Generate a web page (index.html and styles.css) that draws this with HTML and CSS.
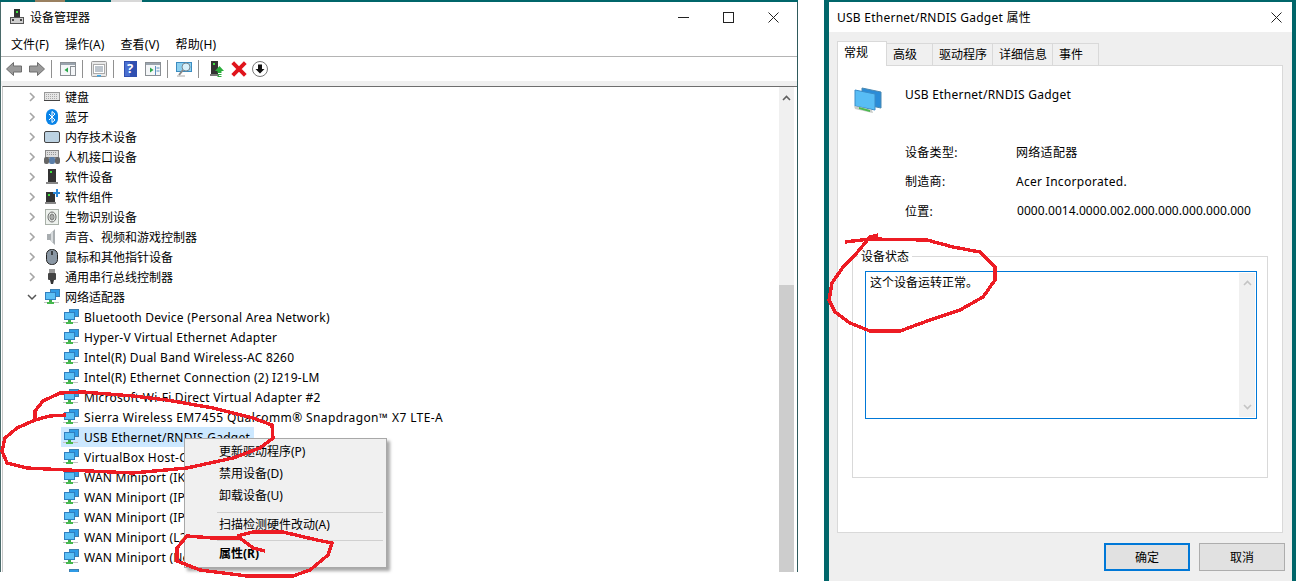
FILE: index.html
```html
<!DOCTYPE html>
<html lang="zh-CN">
<head>
  <meta charset="UTF-8" />
  <title>设备管理器</title>
  <link rel="stylesheet" href="styles.css">
</head>
<body>

  <svg class="defs" width="0" height="0">
    <symbol id="i-net" viewBox="0 0 16 16">
      <rect x="6.5" y="0.5" width="9" height="7" fill="#2f9be6" stroke="#3c7fb0"/>
      <rect x="1.5" y="3.5" width="10" height="7" fill="#5cc0f5" stroke="#2f7fc0"/>
      <rect x="5" y="11" width="3" height="2" fill="#3fae4a"/>
      <rect x="0" y="13" width="15" height="1" fill="#c4c4c4"/>
      <rect x="3" y="13" width="7" height="2" fill="#46b84f"/>
    </symbol>
    <symbol id="i-chev" viewBox="0 0 10 10">
      <path d="M3 1l4 4-4 4" fill="none" stroke="#a6a6a6" stroke-width="1.6"/>
    </symbol>
    <symbol id="i-chev-open" viewBox="0 0 10 10">
      <path d="M1 3l4 4 4-4" fill="none" stroke="#555" stroke-width="1.5"/>
    </symbol>
    <symbol id="i-keyboard" viewBox="0 0 16 16">
      <rect x="0.5" y="3.5" width="15" height="8" fill="#e6e6e6" stroke="#999"/>
      <path d="M2 5.5h12M2 7.5h12M2 9.5h12" stroke="#aaa" stroke-dasharray="1 1"/>
      <rect x="0" y="11" width="16" height="1" fill="#444"/>
    </symbol>
    <symbol id="i-bluetooth" viewBox="0 0 16 16">
      <rect x="2" y="0" width="12" height="16" rx="6" fill="#0a84e8"/>
      <path d="M5 5l6 6-3 2.500V2.500l3 2.500-6 6" fill="none" stroke="#fff" stroke-width="1"/>
    </symbol>
    <symbol id="i-memory" viewBox="0 0 16 16">
      <rect x="0.500" y="2.500" width="15" height="11" rx="1.500" fill="#bcd2e2" stroke="#444"/>
    </symbol>
    <symbol id="i-hid" viewBox="0 0 16 16">
      <rect x="1.500" y="1.500" width="13" height="7" fill="#ddd" stroke="#888"/>
      <path d="M3 3.500h10M3 5.500h10" stroke="#999" stroke-dasharray="1 1"/>
      <rect x="0" y="8" width="5" height="7" rx="2" fill="#666"/>
      <rect x="11" y="8" width="5" height="7" rx="2" fill="#666"/>
      <rect x="5" y="8" width="6" height="7" rx="2" fill="#5a7ea8"/>
    </symbol>
    <symbol id="i-softdev" viewBox="0 0 16 16">
      <rect x="4" y="0" width="8" height="13" fill="#333"/>
      <rect x="6" y="2" width="2" height="2" fill="#3fe03f"/>
      <rect x="2" y="13" width="12" height="2" fill="#888"/>
    </symbol>
    <symbol id="i-softcomp" viewBox="0 0 16 16">
      <rect x="2" y="3" width="9" height="10" fill="#333"/>
      <rect x="4" y="5" width="2" height="2" fill="#3fe03f"/>
      <path d="M9 3h3V0h2v3h2v2h-2v3h-2V5H9z" fill="#2a86d8"/>
      <rect x="1" y="13" width="11" height="2" fill="#888"/>
    </symbol>
    <symbol id="i-bio" viewBox="0 0 16 16">
      <rect x="1.500" y="0.500" width="13" height="15" fill="#eef2ee" stroke="#a8b0a8"/>
      <ellipse cx="8" cy="8" rx="4" ry="5" fill="none" stroke="#666"/>
      <ellipse cx="8" cy="8" rx="2" ry="3" fill="none" stroke="#666"/>
      <path d="M8 6v4" stroke="#666"/>
    </symbol>
    <symbol id="i-sound" viewBox="0 0 16 16">
      <path d="M3 5h3l5-5v16l-5-5H3z" fill="#a8adb0"/>
      <path d="M8 3v10" stroke="#d8dcde" stroke-width="2"/>
    </symbol>
    <symbol id="i-mouse" viewBox="0 0 16 16">
      <rect x="2.500" y="0.500" width="11" height="15" rx="5" fill="#8a97a4" stroke="#222"/>
      <path d="M8 2v4" stroke="#222" stroke-width="1.500"/>
    </symbol>
    <symbol id="i-usb" viewBox="0 0 16 16">
      <rect x="5" y="0" width="6" height="5" fill="#999"/>
      <rect x="4" y="4" width="8" height="7" rx="1" fill="#444"/>
      <path d="M6 11h4l-1 4H7z" fill="#333"/>
    </symbol>
    <symbol id="t-back" viewBox="0 0 16 16">
      <path d="M0.500 8L7.500 1.500V5H15.500V11H7.500V14.500z" fill="#9a9a9a" stroke="#6e6e6e"/>
    </symbol>
    <symbol id="t-fwd" viewBox="0 0 16 16">
      <path d="M15.500 8L8.500 1.500V5H0.500V11H8.500V14.500z" fill="#9a9a9a" stroke="#6e6e6e"/>
    </symbol>
    <symbol id="t-pane-left" viewBox="0 0 16 16">
      <rect x="0.500" y="1.500" width="15" height="13" fill="#f4f6f8" stroke="#8a8f94"/>
      <rect x="1" y="2" width="14" height="2" fill="#9aa4ae"/>
      <path d="M10.500 5.500H15M10.500 5v9" stroke="#8a8f94"/>
      <path d="M8 6.500L4.500 9 8 11.500z" fill="#2aa84a"/>
    </symbol>
    <symbol id="t-pane-right" viewBox="0 0 16 16">
      <rect x="0.500" y="1.500" width="15" height="13" fill="#f4f6f8" stroke="#8a8f94"/>
      <rect x="1" y="2" width="14" height="2" fill="#9aa4ae"/>
      <path d="M10.500 5v9M11.500 7h3M11.500 10h3" stroke="#5a8ec0"/>
      <path d="M5 6.500L8.500 9 5 11.500z" fill="#2aa84a"/>
    </symbol>
    <symbol id="t-sheet" viewBox="0 0 16 16">
      <rect x="0.500" y="0.500" width="15" height="15" rx="1" fill="#e8e8e8" stroke="#999"/>
      <rect x="2.500" y="3.500" width="11" height="9" fill="#fff" stroke="#aaa"/>
      <path d="M4 6h8M4 8h8M4 10h8" stroke="#7a8a9a"/>
      <rect x="6" y="14" width="4" height="1.500" fill="#3fa8e8"/>
    </symbol>
    <symbol id="t-help" viewBox="0 0 13 16">
      <rect x="0" y="0" width="13" height="16" fill="#2f4fb0"/>
      <rect x="1" y="1" width="5" height="14" fill="#4a6fd0"/>
    </symbol>
    <symbol id="t-monitor" viewBox="0 0 16 16">
      <rect x="0.500" y="1.500" width="15" height="9" fill="#8cd0f0" stroke="#3c8cc0"/>
      <circle cx="10" cy="6" r="4" fill="#d8f0fa" stroke="#7a8a94"/>
      <path d="M7 9l-4 5" stroke="#888" stroke-width="2"/>
      <path d="M1 15h8" stroke="#aaa"/>
    </symbol>
    <symbol id="t-update" viewBox="0 0 14 16">
      <rect x="1" y="0" width="7" height="13" fill="#333"/>
      <rect x="3" y="2" width="2" height="2" fill="#3fe03f"/>
      <rect x="0" y="13" width="9" height="2" fill="#777"/>
      <path d="M9.500 5L14 10h-2.500v2h-4v-2H5z" fill="#2cae3c"/>
      <path d="M7.500 13h4v1h-4zM7.500 15h4v1h-4z" fill="#2cae3c"/>
    </symbol>
    <symbol id="t-remove" viewBox="0 0 14 14">
      <path d="M1.500 1.500l11 11M12.500 1.500l-11 11" stroke="#e0141c" stroke-width="3.400" fill="none"/>
    </symbol>
    <symbol id="t-down" viewBox="0 0 16 16">
      <circle cx="8" cy="8" r="7.500" fill="#fff" stroke="#777"/>
      <path d="M6 3.500h4V8h2.500L8 12.500 3.500 8H6z" fill="#111"/>
    </symbol>
    <symbol id="i-net-big" viewBox="0 0 28 26">
      <path d="M8 1l19 4v16l-19-4z" fill="#2a8cd8" stroke="#4a88b0"/>
      <path d="M1 3l20 4v16L1 19z" fill="#58bdf5" stroke="#3a8cc8"/>
      <path d="M0 19l6 1 12 3 1 3-5-1-13-3z" fill="#c8ccc8"/>
      <path d="M5 20l11 3v2L5 22z" fill="#4cba50"/>
    </symbol>
  </svg>

  <div class="desktop">

    <section class="devmgr">
      <div class="strip">
        <span class="strip-photo"></span>
        <span class="strip-tab"></span>
      </div>
      <header class="titlebar">
        <svg class="app-icon" width="14" height="16" viewBox="0 0 14 16">
          <rect x="4" y="0" width="6" height="8" fill="#333"/>
          <rect x="6" y="2" width="2" height="2" fill="#3fe03f"/>
          <rect x="0.500" y="8.500" width="13" height="6" fill="#cfcfcf" stroke="#555"/>
          <rect x="2" y="10" width="2" height="2" fill="#444"/>
          <rect x="10" y="10" width="2" height="2" fill="#444"/>
        </svg>
        <span class="app-title">设备管理器</span>
        <div class="win-btns">
          <svg width="11" height="11" viewBox="0 0 11 11"><path d="M0 5.500h11" stroke="#222"/></svg>
          <svg width="11" height="11" viewBox="0 0 11 11"><rect x="0.500" y="0.500" width="10" height="10" fill="none" stroke="#222"/></svg>
          <svg width="11" height="11" viewBox="0 0 11 11"><path d="M0.500 0.500l10 10M10.500 0.500l-10 10" stroke="#222"/></svg>
        </div>
      </header>
      <nav class="menubar">
        <span>文件(F)</span>
        <span>操作(A)</span>
        <span>查看(V)</span>
        <span>帮助(H)</span>
      </nav>
      <div class="toolbar">
        <svg class="tool"><use href="#t-back"/></svg>
        <svg class="tool"><use href="#t-fwd"/></svg>
        <i class="sep"></i>
        <svg class="tool"><use href="#t-pane-left"/></svg>
        <i class="sep"></i>
        <svg class="tool"><use href="#t-sheet"/></svg>
        <i class="sep"></i>
        <span class="tool-help"><svg width="13" height="16"><use href="#t-help"/></svg><b>?</b></span>
        <svg class="tool"><use href="#t-pane-right"/></svg>
        <i class="sep"></i>
        <svg class="tool"><use href="#t-monitor"/></svg>
        <i class="sep"></i>
        <svg class="tool tool-update"><use href="#t-update"/></svg>
        <svg class="tool tool-remove"><use href="#t-remove"/></svg>
        <svg class="tool"><use href="#t-down"/></svg>
      </div>
      <div class="toolstrip"></div>

      <div class="treewrap">
        <ul class="tree">
          <li><svg class="chev"><use href="#i-chev"/></svg><svg class="ico"><use href="#i-keyboard"/></svg>键盘</li>
          <li><svg class="chev"><use href="#i-chev"/></svg><svg class="ico"><use href="#i-bluetooth"/></svg>蓝牙</li>
          <li><svg class="chev"><use href="#i-chev"/></svg><svg class="ico"><use href="#i-memory"/></svg>内存技术设备</li>
          <li><svg class="chev"><use href="#i-chev"/></svg><svg class="ico"><use href="#i-hid"/></svg>人机接口设备</li>
          <li><svg class="chev"><use href="#i-chev"/></svg><svg class="ico"><use href="#i-softdev"/></svg>软件设备</li>
          <li><svg class="chev"><use href="#i-chev"/></svg><svg class="ico"><use href="#i-softcomp"/></svg>软件组件</li>
          <li><svg class="chev"><use href="#i-chev"/></svg><svg class="ico"><use href="#i-bio"/></svg>生物识别设备</li>
          <li><svg class="chev"><use href="#i-chev"/></svg><svg class="ico"><use href="#i-sound"/></svg>声音、视频和游戏控制器</li>
          <li><svg class="chev"><use href="#i-chev"/></svg><svg class="ico"><use href="#i-mouse"/></svg>鼠标和其他指针设备</li>
          <li><svg class="chev"><use href="#i-chev"/></svg><svg class="ico"><use href="#i-usb"/></svg>通用串行总线控制器</li>
          <li><svg class="chev"><use href="#i-chev-open"/></svg><svg class="ico"><use href="#i-net"/></svg>网络适配器</li>
          <li class="child"><svg class="ico"><use href="#i-net"/></svg>Bluetooth Device (Personal Area Network)</li>
          <li class="child"><svg class="ico"><use href="#i-net"/></svg>Hyper-V Virtual Ethernet Adapter</li>
          <li class="child"><svg class="ico"><use href="#i-net"/></svg>Intel(R) Dual Band Wireless-AC 8260</li>
          <li class="child"><svg class="ico"><use href="#i-net"/></svg>Intel(R) Ethernet Connection (2) I219-LM</li>
          <li class="child"><svg class="ico"><use href="#i-net"/></svg>Microsoft Wi-Fi Direct Virtual Adapter #2</li>
          <li class="child child-wide"><svg class="ico"><use href="#i-net"/></svg>Sierra Wireless EM7455 Qualcomm® Snapdragon™ X7 LTE-A</li>
          <li class="child"><span class="selected"><svg class="ico"><use href="#i-net"/></svg>USB Ethernet/RNDIS Gadget</span></li>
          <li class="child"><svg class="ico"><use href="#i-net"/></svg>VirtualBox Host-Only Ethernet Adapter</li>
          <li class="child"><svg class="ico"><use href="#i-net"/></svg>WAN Miniport (IKEv2)</li>
          <li class="child"><svg class="ico"><use href="#i-net"/></svg>WAN Miniport (IP)</li>
          <li class="child"><svg class="ico"><use href="#i-net"/></svg>WAN Miniport (IPv6)</li>
          <li class="child"><svg class="ico"><use href="#i-net"/></svg>WAN Miniport (L2TP)</li>
          <li class="child"><svg class="ico"><use href="#i-net"/></svg>WAN Miniport (Network Monitor)</li>
          <li class="child"><svg class="ico"><use href="#i-net"/></svg></li>
        </ul>
        <div class="vscroll">
          <svg class="vscroll-arrow" width="9" height="6" viewBox="0 0 9 6"><path d="M1 5l3.500-3.500L8 5" fill="none" stroke="#606060" stroke-width="1.600"/></svg>
          <div class="vscroll-thumb"></div>
        </div>
      </div>

      <div class="ctxmenu">
        <div class="ctx-item">更新驱动程序(P)</div>
        <div class="ctx-item">禁用设备(D)</div>
        <div class="ctx-item">卸载设备(U)</div>
        <div class="ctx-sep"></div>
        <div class="ctx-item">扫描检测硬件改动(A)</div>
        <div class="ctx-sep"></div>
        <div class="ctx-item ctx-bold">属性(R)</div>
      </div>
    </section>

    <section class="props">
      <header class="props-title">
        <span>USB Ethernet/RNDIS Gadget 属性</span>
        <svg width="11" height="11" viewBox="0 0 11 11"><path d="M0.500 0.500l10 10M10.500 0.500l-10 10" stroke="#222"/></svg>
      </header>
      <div class="props-body">
        <div class="tabs">
          <span class="tab tab-active">常规</span>
          <span class="tab tab-w46">高级</span>
          <span class="tab tab-w60">驱动程序</span>
          <span class="tab tab-w60">详细信息</span>
          <span class="tab tab-w46">事件</span>
        </div>
        <div class="panel">
          <div class="dev-head">
            <svg class="dev-icon" width="28" height="26"><use href="#i-net-big"/></svg>
            <span>USB Ethernet/RNDIS Gadget</span>
          </div>
          <dl class="dev-info">
            <dt>设备类型:</dt><dd>网络适配器</dd>
            <dt>制造商:</dt><dd>Acer Incorporated.</dd>
            <dt>位置:</dt><dd class="dev-loc">0000.0014.0000.002.000.000.000.000.000</dd>
          </dl>
          <fieldset class="status">
            <legend>设备状态</legend>
            <div class="status-box">
              <p>这个设备运转正常。</p>
              <div class="status-scroll">
                <svg width="9" height="6" viewBox="0 0 9 6"><path d="M1 5l3.500-3.500L8 5" fill="none" stroke="#c4c4c4" stroke-width="1.600"/></svg>
                <svg width="9" height="6" viewBox="0 0 9 6"><path d="M1 1l3.500 3.500L8 1" fill="none" stroke="#c4c4c4" stroke-width="1.600"/></svg>
              </div>
            </div>
          </fieldset>
        </div>
        <div class="actions">
          <button class="btn btn-default" type="button">确定</button>
          <button class="btn" type="button">取消</button>
        </div>
      </div>
    </section>

    <!-- hand drawn red circles on top of the screenshot -->
    <svg class="scribbles" width="1300" height="588" viewBox="0 0 1300 588">
      <path d="M66 415L50 416 35 420 35 411 43 401 60 393 83 392 133 396 167 400 213 408 253 418 272 425 273 438 260 448 233 458 187 468 133 473 67 470 27 468 7 463 2 451 5 438 17 428 35 420"/>
      <path d="M237 536L253 532 283 532 317 540 332 543 328 555 310 570 293 576 247 576 200 570 177 561 177 548 187 536 213 538 240 538 253 548 265 551"/>
      <path d="M845 242L870 239 927 240 953 247 980 252 995 267 995 280 983 297 960 310 930 320 900 331 870 331 850 323 835 312 829 300 832 283 843 267 855 255 870 237 878 235"/>
    </svg>
  </div>

</body>
</html>
```

FILE: styles.css
```css
* {
  box-sizing: border-box;
}

body {
  margin: 0;
  background: #ffffff;
  color: #000000;
  font-family: "Noto Sans", "Noto Sans CJK SC", sans-serif;
  font-size: 12px;
  overflow: hidden;
}

.defs {
  position: absolute;
}

.desktop {
  position: relative;
  display: flex;
  align-items: flex-start;
  width: 1300px;
  height: 588px;
}

/* device manager window */
.devmgr {
  position: relative;
  display: flex;
  flex-direction: column;
  width: 798px;
  height: 572px;
  border-left: 1px solid #4a6a6a;
  border-right: 1px solid #2f5a5c;
}

.strip {
  display: flex;
  height: 2px;
  flex: none;
  background: #00666a;
  margin: 0 -1px;
}

.strip-photo {
  width: 30px;
  margin-left: 35px;
  background: #9a8060;
}

.strip-tab {
  width: 31px;
  margin-left: 46px;
  background: #d8d8d8;
}

.titlebar {
  display: flex;
  align-items: center;
  flex: none;
  height: 30px;
  padding-left: 9px;
}

.app-title {
  margin-left: 6px;
}

.win-btns {
  display: flex;
  gap: 34px;
  margin-left: auto;
  padding-right: 18px;
}

.menubar {
  display: flex;
  align-items: center;
  gap: 16px;
  flex: none;
  height: 25px;
  padding-left: 10px;
  border-bottom: 1px solid #b4b4b4;
  letter-spacing: 0.12px;
}

.toolbar {
  display: flex;
  align-items: center;
  flex: none;
  height: 24px;
  padding-left: 5px;
}

.tool {
  width: 16px;
  height: 16px;
  margin-right: 7px;
}

.tool-update {
  margin-left: 2px;
  margin-right: 6px;
}

.tool-remove {
  margin-right: 5px;
}

.tool-help {
  position: relative;
  display: flex;
  width: 13px;
  height: 16px;
  margin-left: 2px;
  margin-right: 8px;
}

.tool-help b {
  position: absolute;
  left: 3px;
  top: -2px;
  color: #ffffff;
  font-size: 13px;
}

.sep {
  width: 1px;
  height: 18px;
  margin-right: 8px;
  margin-left: -1px;
  background: #909090;
}

.toolstrip {
  flex: none;
  height: 5px;
  background: #f0f0f0;
}

.treewrap {
  display: flex;
  flex: 1;
  min-height: 0;
  margin-left: 1px;
  border-top: 1px solid #6e6e6e;
  border-left: 1px solid #c8c8c8;
}

.tree {
  flex: 1;
  margin: 0;
  padding: 0;
  list-style: none;
  overflow: hidden;
}

.tree li {
  display: flex;
  align-items: center;
  height: 20px;
  padding-left: 24px;
  white-space: nowrap;
}

.tree li.child {
  padding-left: 60px;
  letter-spacing: 0.25px;
}

.tree li.child-wide {
  letter-spacing: 0.38px;
}

.chev {
  width: 10px;
  height: 10px;
  margin-right: 7px;
  flex: none;
}

.ico {
  width: 16px;
  height: 16px;
  margin-right: 5px;
  flex: none;
}

.selected {
  display: flex;
  align-items: center;
  height: 20px;
  width: 193px;
  margin-left: -2px;
  padding-left: 2px;
  background: #cce8ff;
}

.vscroll {
  flex: none;
  display: flex;
  flex-direction: column;
  width: 15px;
  margin-right: 3px;
  background: #f0f0f0;
}

.vscroll-arrow {
  align-self: center;
  margin-top: 8px;
}

.vscroll-thumb {
  width: 15px;
  height: 287px;
  margin-top: auto;
  background: #cdcdcd;
}

.ctxmenu {
  position: absolute;
  left: 183px;
  top: 438px;
  width: 203px;
  height: 130px;
  padding: 2px;
  background: #f0f0f0;
  border: 1px solid #a8a8a8;
  box-shadow: 3px 3px 3px rgba(0, 0, 0, 0.35);
}

.ctx-item {
  height: 22px;
  line-height: 22px;
  padding-left: 32px;
}

.ctx-sep {
  height: 1px;
  margin: 5px 1px 1px 30px;
  background: #d0d0d0;
}

.ctx-sep + .ctx-item + .ctx-sep {
  margin: 4px 1px 2px 30px;
}

.ctx-bold {
  font-weight: 700;
}

/* properties dialog */
.props {
  display: flex;
  flex-direction: column;
  width: 472px;
  height: 581px;
  margin-left: 26px;
  border-top: 2px solid #00666a;
  border-left: 5px solid #00666a;
  border-right: 4px solid #00666a;
}

.props-title {
  display: flex;
  align-items: center;
  justify-content: space-between;
  flex: none;
  height: 30px;
  padding: 0 10px 0 8px;
  background: #ffffff;
  letter-spacing: 0.25px;
}

.props-body {
  display: flex;
  flex-direction: column;
  flex: 1;
  padding: 9px 9px 0 8px;
  background: #efefef;
}

.tabs {
  display: flex;
  align-items: flex-end;
  flex: none;
  height: 25px;
  margin-bottom: -1px;
}

.tab {
  display: flex;
  align-items: center;
  height: 23px;
  padding: 0 0 2px 6px;
  border: 1px solid #d9d9d9;
  border-left: 0;
  background: #f0f0f0;
}

.tab-active {
  position: relative;
  width: 50px;
  height: 25px;
  border-left: 1px solid #d9d9d9;
  border-bottom: 0;
  background: #ffffff;
  padding-bottom: 4px;
  z-index: 1;
}

.tab-w46 {
  width: 46px;
}

.tab-w60 {
  width: 60px;
}

.panel {
  display: flex;
  flex-direction: column;
  height: 468px;
  padding: 0 14px;
  background: #ffffff;
  border: 1px solid #d9d9d9;
}

.dev-head {
  display: flex;
  align-items: flex-start;
  height: 71px;
  padding-top: 20px;
  letter-spacing: 0.25px;
}

.dev-head span {
  line-height: 18px;
}

.dev-icon {
  margin: 1px 23px 0 2px;
}

.dev-info {
  display: grid;
  grid-template-columns: 111px 1fr;
  grid-auto-rows: 29.5px;
  align-items: center;
  margin: 0 0 0 53px;
  height: 88px;
}

.dev-info dt,
.dev-info dd {
  margin: 0;
  letter-spacing: 0.3px;
}

.dev-info .dev-loc {
  padding-left: 1px;
  letter-spacing: 0.06px;
}

.status {
  height: 231px;
  margin: 22px 0 0 0;
  padding: 0 10px 0 12px;
  border: 1px solid #d9d9d9;
}

.status legend {
  margin-left: -7px;
  padding: 2px 3px 0;
  line-height: 16px;
}

.status-box {
  display: flex;
  justify-content: space-between;
  height: 148px;
  margin-top: 6px;
  padding: 1px;
  background: #ffffff;
  border: 1px solid #0078d7;
}

.status-box p {
  margin: 0;
  padding: 1px 3px;
  line-height: 18px;
}

.status-scroll {
  display: flex;
  flex-direction: column;
  align-items: center;
  justify-content: space-between;
  width: 16px;
  padding: 7px 0;
  background: #f0f0f0;
}

.actions {
  display: flex;
  justify-content: flex-end;
  gap: 9px;
  margin-top: 10px;
  margin-right: -2px;
}

.btn {
  width: 86px;
  height: 28px;
  padding: 0;
  font: inherit;
  background: #e1e1e1;
  border: 1px solid #adadad;
}

.btn-default {
  border: 2px solid #0078d7;
}

.scribbles {
  position: absolute;
  left: 0;
  top: 0;
  pointer-events: none;
}

.scribbles path {
  fill: none;
  stroke: #ed1c24;
  stroke-width: 3.4;
  shape-rendering: crispEdges;
}
```
